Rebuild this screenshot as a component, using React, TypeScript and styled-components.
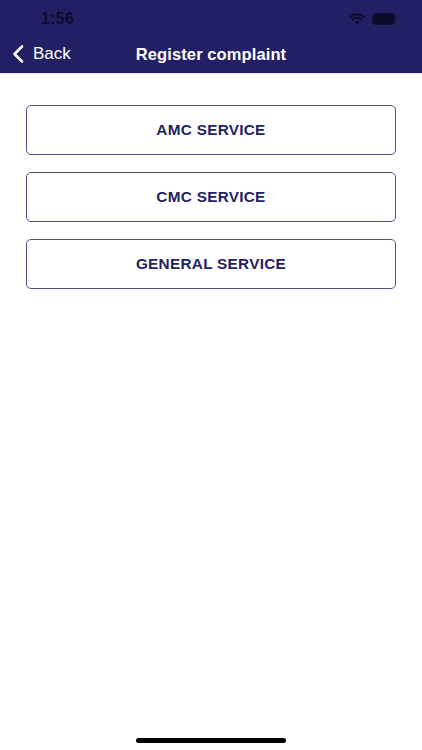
import React from "react";
import styled, { createGlobalStyle } from "styled-components";

const Global = createGlobalStyle`
  html, body { margin: 0; padding: 0; background: #ffffff; }
  body { font-family: "Liberation Sans", Arial, sans-serif; }
  * { box-sizing: border-box; }
`;

const Screen = styled.div`
  width: 422px;
  height: 750px;
  display: flex;
  flex-direction: column;
  background: #ffffff;
  position: relative;
  overflow: hidden;
`;

const Header = styled.header`
  background: #231f64;
  display: flex;
  flex-direction: column;
  height: 74px;
  border-bottom: 1px solid #e9e8f2;
`;

const StatusBar = styled.div`
  height: 37px;
  display: flex;
  align-items: center;
  justify-content: space-between;
  padding: 0 24px 0 41px;
`;

const Time = styled.span`
  font-size: 16px;
  font-weight: 700;
  color: #0d0b2a;
  letter-spacing: 0.3px;
  margin-top: 1px;
`;

const StatusIcons = styled.div`
  display: flex;
  align-items: center;
  gap: 7px;
`;

const NavBar = styled.div`
  flex: 1;
  display: grid;
  grid-template-columns: 1fr auto 1fr;
  align-items: center;
  padding: 0 12px 2px 12px;
`;

const BackButton = styled.button`
  display: flex;
  align-items: center;
  gap: 9px;
  background: none;
  border: none;
  padding: 0;
  color: #ffffff;
  font-family: "Liberation Sans", Arial, sans-serif;
  font-size: 17px;
  cursor: pointer;
  justify-self: start;
`;

const Title = styled.h1`
  margin: 0;
  color: #ffffff;
  font-size: 16.5px;
  font-weight: 700;
  letter-spacing: 0.1px;
`;

const List = styled.main`
  display: flex;
  flex-direction: column;
  gap: 17px;
  padding: 31px 26px 0 26px;
`;

const ServiceButton = styled.button`
  height: 50px;
  width: 100%;
  border: 1.5px solid #55517f;
  border-radius: 5px;
  background: #ffffff;
  color: #231f64;
  font-family: "Liberation Sans", Arial, sans-serif;
  font-size: 15.3px;
  font-weight: 700;
  letter-spacing: 0.3px;
  cursor: pointer;
`;

const HomeIndicator = styled.div`
  position: absolute;
  left: 136px;
  bottom: 7px;
  width: 150px;
  height: 5px;
  border-radius: 3px;
  background: #000000;
`;

const services = ["AMC SERVICE", "CMC SERVICE", "GENERAL SERVICE"];

export default function App() {
  return (
    <>
      <Global />
      <Screen>
        <Header>
          <StatusBar>
            <Time>1:56</Time>
            <StatusIcons>
              <svg width="16" height="12" viewBox="0 0 16 12">
                <path d="M8 11.5 L5.6 8.9 A3.4 3.4 0 0 1 10.4 8.9 Z" fill="#0d0b2a" />
                <path d="M3.4 6.6 A6.5 6.5 0 0 1 12.6 6.6" stroke="#0d0b2a" strokeWidth="1.8" fill="none" strokeLinecap="round" />
                <path d="M1.1 4.1 A9.8 9.8 0 0 1 14.9 4.1" stroke="#0d0b2a" strokeWidth="1.8" fill="none" strokeLinecap="round" />
              </svg>
              <svg width="26" height="12" viewBox="0 0 26 12">
                <rect x="0.5" y="0.5" width="22" height="11" rx="3" fill="#0d0b2a" stroke="#0d0b2a" strokeOpacity="0.5" />
                <rect x="23.5" y="4" width="1.5" height="4" rx="0.7" fill="#0d0b2a" opacity="0.5" />
              </svg>
            </StatusIcons>
          </StatusBar>
          <NavBar>
            <BackButton>
              <svg width="12" height="18" viewBox="0 0 12 18">
                <path d="M10 1.5 L2.5 9 L10 16.5" stroke="#ffffff" strokeWidth="2.6" fill="none" strokeLinecap="round" strokeLinejoin="round" />
              </svg>
              Back
            </BackButton>
            <Title>Register complaint</Title>
            <span />
          </NavBar>
        </Header>
        <List>
          {services.map((s) => (
            <ServiceButton key={s}>{s}</ServiceButton>
          ))}
        </List>
        <HomeIndicator />
      </Screen>
    </>
  );
}
